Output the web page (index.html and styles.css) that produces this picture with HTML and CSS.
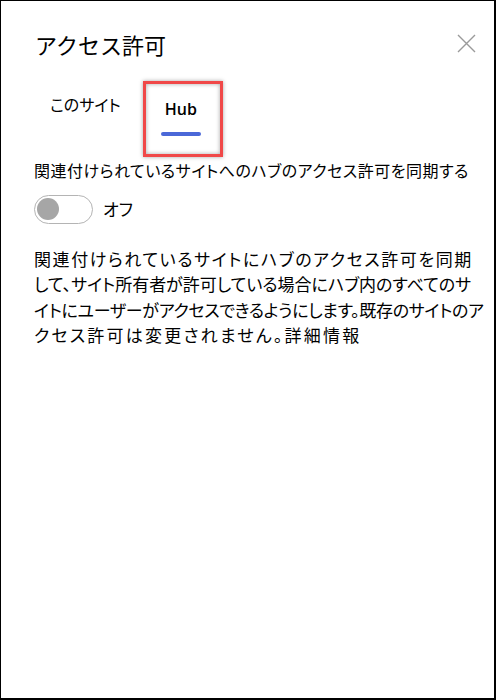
FILE: index.html
```html
<!DOCTYPE html>
<html lang="ja">
<head>
<meta charset="utf-8">
<title>アクセス許可</title>
<link rel="stylesheet" href="styles.css">
</head>
<body>
<div class="panel">
  <div class="header">
    <h1 class="title">アクセス許可</h1>
    <button class="close" aria-label="閉じる">
      <svg width="19" height="19" viewBox="0 0 19 19"><path d="M1 1 L18 18 M18 1 L1 18" stroke="#9a9a9a" stroke-width="1.4" fill="none"/></svg>
    </button>
  </div>
  <div class="tabs">
    <div class="tab">このサイト</div>
    <div class="tab tab-active">Hub<span class="tab-bar"></span></div>
  </div>
  <div class="label">関連付けられているサイトへのハブのアクセス許可を同期する</div>
  <div class="toggle-row">
    <span class="toggle"><span class="knob"></span></span>
    <span class="toggle-text">オフ</span>
  </div>
  <p class="desc">
    <span class="line">関連付けられているサイトにハブのアクセス許可を同期</span>
    <span class="line">して、サイト所有者が許可している場合にハブ内のすべてのサ</span>
    <span class="line">イトにユーザーがアクセスできるようにします。既存のサイトのア</span>
    <span class="line last">クセス許可は変更されません。詳細情報</span>
  </p>
  <div class="highlight"></div>
</div>
</body>
</html>
```

FILE: styles.css
```css
html, body {
  margin: 0;
  padding: 0;
  background: #fff;
}
.panel {
  position: relative;
  box-sizing: border-box;
  width: 496px;
  height: 700px;
  border-style: solid;
  border-color: #000;
  border-width: 1px 2px 2px 1px;
  padding: 27px 18px 0 33px;
  font-family: "Noto Sans CJK JP", "Noto Sans", sans-serif;
  color: #000;
}
.header {
  display: flex;
  justify-content: space-between;
  align-items: flex-start;
}
.title {
  margin: 0;
  font-size: 22px;
  font-weight: 400;
  line-height: 32px;
  padding-left: 1px;
}
.close {
  border: 0;
  background: none;
  padding: 0;
  margin-top: 6px;
  width: 19px;
  height: 19px;
  display: block;
}
.close svg { display: block; }
.tabs {
  display: flex;
  margin-top: 32px;
  height: 44px;
}
.tab {
  position: relative;
  font-size: 16px;
  line-height: 22px;
  padding-top: 1px;
  font-feature-settings: "palt";
}
.tab:first-child {
  margin-left: 16px;
}
.tab-active {
  margin-left: 40px;
  width: 40px;
  text-align: center;
  font-family: "Open Sans", "Noto Sans", sans-serif;
  font-weight: 600;
  font-size: 16px;
  padding-top: 6px;
}
.tab-bar {
  position: absolute;
  left: 0;
  bottom: 0;
  width: 40px;
  height: 4px;
  border-radius: 2px;
  background: #4b68d8;
}
.label {
  margin-top: 23px;
  font-size: 16px;
  line-height: 22px;
  letter-spacing: 0.5px;
  font-feature-settings: "palt";
  white-space: nowrap;
}
.toggle-row {
  display: flex;
  align-items: center;
  margin-top: 13px;
  height: 30px;
}
.toggle {
  box-sizing: border-box;
  width: 59px;
  height: 29px;
  border: 1.5px solid #b4b4b4;
  border-radius: 15px;
  display: flex;
  align-items: center;
  padding-left: 2px;
}
.knob {
  width: 22px;
  height: 22px;
  border-radius: 50%;
  background: #a6a6a6;
}
.toggle-text {
  margin-left: 10px;
  font-size: 17px;
  line-height: 24px;
  font-feature-settings: "palt";
}
.desc {
  margin: 22px 0 0;
  width: 437px;
  font-size: 17px;
  line-height: 25.3px;
  letter-spacing: -0.3px;
  font-feature-settings: "palt";
}
.line {
  display: block;
  white-space: nowrap;
  text-align: justify;
  text-align-last: justify;
}
.line.last {
  text-align-last: auto;
  letter-spacing: 2.2px;
}
.highlight {
  position: absolute;
  left: 142px;
  top: 80px;
  width: 74px;
  height: 70px;
  border: 3px solid #f04848;
  box-shadow: 0 0 4px rgba(0,0,0,0.35), inset 0 0 4px rgba(0,0,0,0.35);
}
```
